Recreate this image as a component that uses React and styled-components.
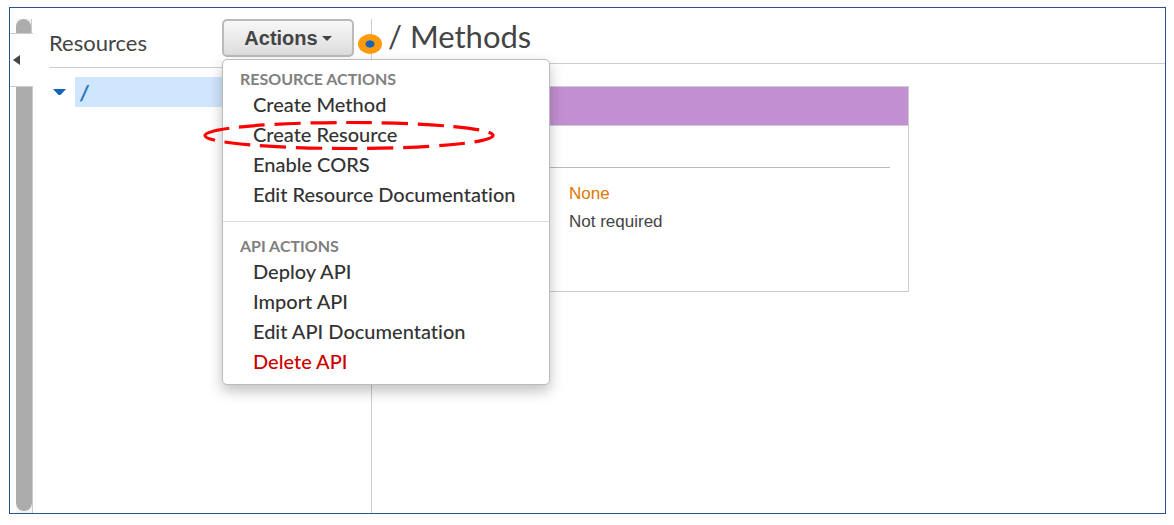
import React from "react";
import styled, { createGlobalStyle } from "styled-components";

const GlobalStyle = createGlobalStyle`
  *, *::before, *::after { box-sizing: border-box; }
  body {
    margin: 0;
    background: #fff;
    color: #444;
    font-family: Lato, "Liberation Sans", sans-serif;
    font-variant-ligatures: none;
  }
  button { font-family: inherit; font-variant-ligatures: inherit; cursor: pointer; }
  h1, h2, h3, p, ul { margin: 0; padding: 0; }
  ul { list-style: none; }
`;

const Frame = styled.div`
  display: flex;
  min-height: calc(100vh - 18px);
  margin: 7px 8px 10px 9px;
  padding-top: 11px;
  border: 1px solid #2f528f;
`;

const Rail = styled.div`
  display: flex;
  flex-direction: column;
  flex: 0 0 23px;
`;

const Track = styled.div`
  flex: ${(p) => (p.$grow ? "1 0 auto" : "0 0 14px")};
  margin-left: 6px;
  margin-right: ${(p) => (p.$grow ? "0" : "1px")};
  padding-bottom: ${(p) => (p.$grow ? "2px" : "0")};
  border-right: 1px solid #ccc;
  display: flex;
  background: #f4f4f4;
`;

const Thumb = styled.div`
  flex: 1;
  background: #acacac;
  border-radius: ${(p) => (p.$end ? "0 0 8px 8px" : "8px 8px 0 0")};
`;

const CollapseButton = styled.button`
  display: flex;
  align-items: center;
  height: 54px;
  padding: 0 0 0 3px;
  background: #fff;
  border: solid #ccc;
  border-width: 1px 0;
`;

const Sidebar = styled.aside`
  flex: 0 0 339px;
  padding-left: 16px;
  border-right: 1px solid #ccc;
`;

const SidebarHeader = styled.header`
  display: flex;
  justify-content: space-between;
  align-items: center;
  padding: 0 17px 10px 0;
  border-bottom: 1px solid #ccc;
`;

const SidebarTitle = styled.h2`
  padding-top: 10px;
  font-size: 22px;
  line-height: 28px;
  font-weight: 400;
`;

const Dropdown = styled.div`
  position: relative;
`;

const ActionsButton = styled.button`
  display: flex;
  align-items: center;
  justify-content: center;
  gap: 4px;
  width: 132px;
  height: 38px;
  padding: 0;
  color: #444;
  font: bold 20px/24px "Liberation Sans", Arial, sans-serif;
  background: linear-gradient(#f8f8f8, #dcdcdc);
  border: 2px solid #bbb;
  border-radius: 5px;
`;

const Hotspot = styled.span`
  position: absolute;
  z-index: 1;
  top: 15px;
  left: 136px;
  width: 24px;
  height: 20px;
  background: radial-gradient(ellipse 5px 4px, #1166bb 80%, #ff9a0c 100%);
  border-radius: 50%;
`;

const Menu = styled.div`
  position: absolute;
  z-index: 2;
  top: 40px;
  left: 0;
  width: 328px;
  padding-bottom: 8px;
  background: #fff;
  border: 1px solid #bbb;
  border-radius: 5px;
  box-shadow: 0 6px 14px rgba(0, 0, 0, 0.25);
`;

const MenuSection = styled.section`
  padding-top: ${(p) => (p.$divided ? "14px" : "9px")};
  margin-top: ${(p) => (p.$divided ? "12px" : "0")};
  border-top: ${(p) => (p.$divided ? "1px solid #ddd" : "0")};
`;

const MenuLabel = styled.h3`
  padding-left: 17px;
  color: #808080;
  font-size: 16px;
  line-height: 20px;
  font-weight: 700;
`;

const MenuItem = styled.li`
  position: relative;
`;

const MenuButton = styled.button`
  display: block;
  width: 100%;
  height: 30px;
  padding: 0 0 0 30px;
  border: 0;
  background: none;
  color: ${(p) => (p.$danger ? "#cc0000" : "#333")};
  font-size: 20px;
  line-height: 30px;
  font-weight: 500;
  text-align: left;
  white-space: nowrap;
`;

const Highlight = styled.svg`
  position: absolute;
  top: 0;
  left: -20px;
  pointer-events: none;
`;

const TreeRow = styled.div`
  display: flex;
  align-items: center;
  margin-top: 9px;
`;

const TreeToggle = styled.button`
  display: flex;
  width: 26px;
  padding: 0 0 0 4px;
  border: 0;
  background: none;
`;

const TreeLink = styled.a`
  flex: 1;
  padding-left: 5px;
  background: #d0e6ff;
  color: #3377bb;
  font-size: 20px;
  line-height: 30px;
  font-weight: 900;
  font-style: italic;
  text-decoration: none;
`;

const Main = styled.main`
  flex: 1;
  min-width: 0;
`;

const MainTitle = styled.h1`
  padding: 0 16px 10px;
  border-bottom: 1px solid #ccc;
  font-size: 31px;
  line-height: 34px;
  font-weight: 400;
`;

const MethodCard = styled.section`
  max-width: 521px;
  margin: 22px 16px;
  border: 1px solid #ccc;
`;

const CardBar = styled.div`
  height: 39px;
  background: #c38fd3;
  border-bottom: 1px solid #ccc;
`;

const CardBody = styled.div`
  margin: 41px 18px 0;
  padding: 12px 0 55px 162px;
  border-top: 1px solid #bbb;
`;

const Value = styled.p`
  color: ${(p) => (p.$accent ? "#e07700" : "#444")};
  font: 17px/28px "Liberation Sans", Arial, sans-serif;
`;

const sections = [
  {
    label: "RESOURCE ACTIONS",
    items: [
      { text: "Create Method" },
      { text: "Create Resource", highlighted: true },
      { text: "Enable CORS" },
      { text: "Edit Resource Documentation" },
    ],
  },
  {
    label: "API ACTIONS",
    items: [
      { text: "Deploy API" },
      { text: "Import API" },
      { text: "Edit API Documentation" },
      { text: "Delete API", danger: true },
    ],
  },
];

function DashedEllipse() {
  return (
    <Highlight width="292" height="34" viewBox="0 0 292 34" aria-hidden="true">
      <path
        d="M2 16.500A144 13 0 0 1 290 16.500A144 13 0 0 1 2 16.500"
        fill="none"
        stroke="#ff0000"
        strokeWidth="3.2"
        strokeDasharray="26 9.75"
      />
    </Highlight>
  );
}

function ActionsMenu() {
  return (
    <Menu>
      {sections.map((section, index) => (
        <MenuSection key={section.label} $divided={index > 0}>
          <MenuLabel>{section.label}</MenuLabel>
          <ul>
            {section.items.map((item) => (
              <MenuItem key={item.text}>
                <MenuButton type="button" $danger={item.danger}>
                  {item.text}
                </MenuButton>
                {item.highlighted && <DashedEllipse />}
              </MenuItem>
            ))}
          </ul>
        </MenuSection>
      ))}
    </Menu>
  );
}

export default function App() {
  return (
    <>
      <GlobalStyle />
      <Frame>
        <Rail>
          <Track>
            <Thumb />
          </Track>
          <CollapseButton type="button" aria-label="Collapse">
            <svg width="7" height="10" viewBox="0 0 7 10">
              <path d="M7 0V10L0 5Z" fill="#444" />
            </svg>
          </CollapseButton>
          <Track $grow>
            <Thumb $end />
          </Track>
        </Rail>
        <Sidebar>
          <SidebarHeader>
            <SidebarTitle>Resources</SidebarTitle>
            <Dropdown>
              <ActionsButton type="button" aria-expanded="true">
                Actions
                <svg width="10" height="5" viewBox="0 0 10 5">
                  <path d="M0 0H10L5 5Z" fill="#444" />
                </svg>
              </ActionsButton>
              <Hotspot />
              <ActionsMenu />
            </Dropdown>
          </SidebarHeader>
          <TreeRow>
            <TreeToggle type="button" aria-label="Toggle">
              <svg width="13" height="6" viewBox="0 0 13 6">
                <path d="M0 0H13L8 5.5Q6.500 6.500 5 5.500Z" fill="#1166bb" />
              </svg>
            </TreeToggle>
            <TreeLink href="#root">/</TreeLink>
          </TreeRow>
        </Sidebar>
        <Main>
          <MainTitle>/ Methods</MainTitle>
          <MethodCard>
            <CardBar />
            <CardBody>
              <Value $accent>None</Value>
              <Value>Not required</Value>
            </CardBody>
          </MethodCard>
        </Main>
      </Frame>
    </>
  );
}
